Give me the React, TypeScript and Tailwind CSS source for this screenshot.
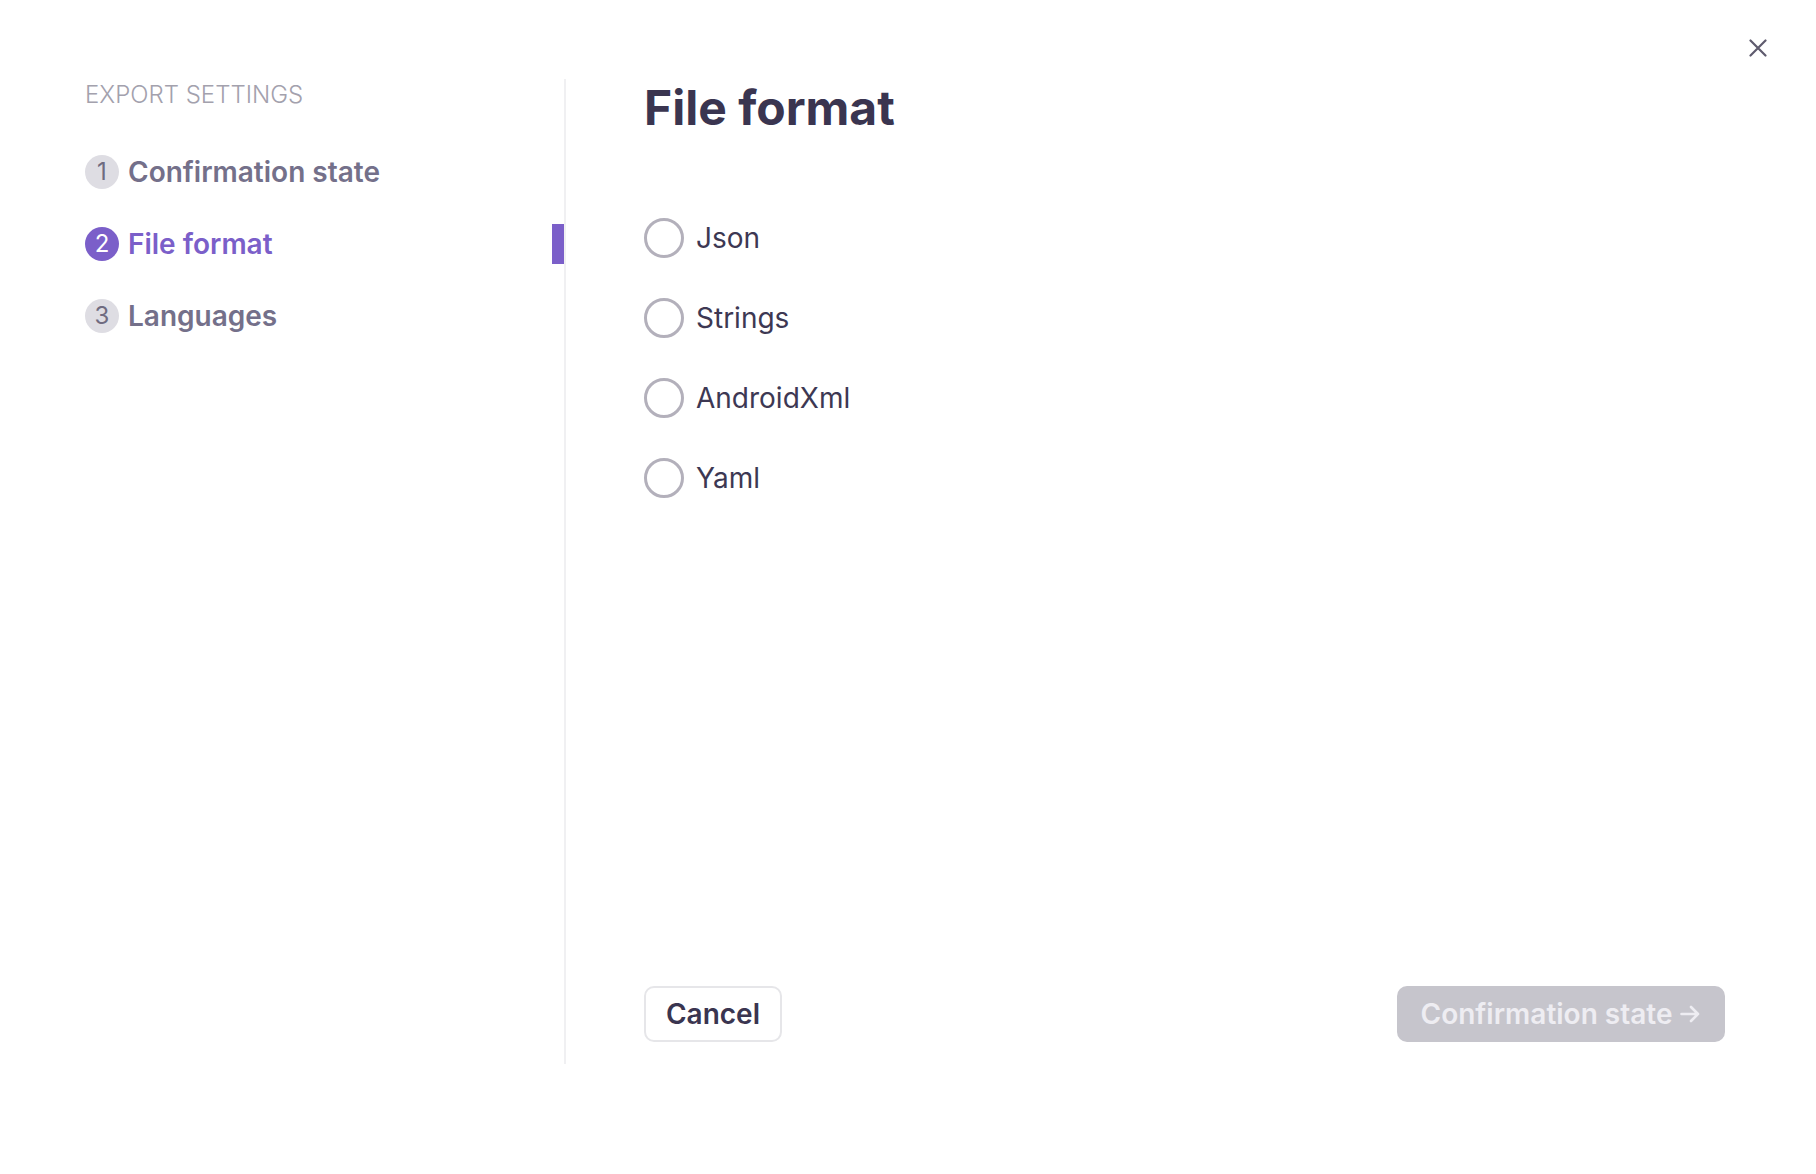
import React, { useState } from 'react';

const steps = [
  { n: 1, label: 'Confirmation state' },
  { n: 2, label: 'File format' },
  { n: 3, label: 'Languages' },
];

const formats = ['Json', 'Strings', 'AndroidXml', 'Yaml'];

export default function App() {
  const [selected, setSelected] = useState<string | null>(null);
  const active = 2;

  return (
    <div className="relative w-full h-[1174px] bg-white font-['Inter','Noto_Sans',sans-serif]">
      {/* Close */}
      <button className="absolute top-[39px] right-[49px] w-[18px] h-[18px] text-[#5f5b6e]">
        <svg viewBox="0 0 18 18" width="18" height="18" fill="none" stroke="currentColor" strokeWidth="2.2" strokeLinecap="round">
          <path d="M1.5 1.5L16.5 16.5M16.5 1.5L1.5 16.5" />
        </svg>
      </button>

      <div className="flex h-[1064px] pt-[79px] pl-[85px] pr-[91px]">
        {/* Sidebar */}
        <div className="w-[479px] flex flex-col">
          <div className="text-[24px] leading-[30px] text-[#a3a1ad] font-light mt-[1px]">EXPORT SETTINGS</div>
          <div className="mt-[26px] flex flex-col">
            {steps.map((s) => {
              const isActive = s.n === active;
              return (
                <div key={s.n} className="h-[72px] flex items-center justify-between">
                  <div className="flex items-center gap-[9px]">
                    <span
                      className={
                        isActive
                          ? 'w-[34px] h-[34px] rounded-full bg-[#7b5fc9] text-white text-[24px] flex items-center justify-center'
                          : 'w-[34px] h-[34px] rounded-full bg-[#dedde3] text-[#6f6b80] text-[24px] flex items-center justify-center'
                      }
                    >
                      {s.n}
                    </span>
                    <span
                      className={
                        isActive
                          ? 'text-[28px] font-semibold text-[#7b5fc9]'
                          : 'text-[28px] font-semibold text-[#74708a]'
                      }
                    >
                      {s.label}
                    </span>
                  </div>
                  {isActive && <div className="w-[12px] h-[40px] bg-[#7b5fc9]" />}
                </div>
              );
            })}
          </div>
        </div>

        {/* Main */}
        <div className="flex-1 flex flex-col border-l-2 border-[#f0f0f2] pl-[78px] pb-[22px]">
          <h1 className="text-[48px] leading-[58px] font-bold text-[#3a3550]">File format</h1>

          <div className="mt-[81px] flex flex-col gap-[40px]">
            {formats.map((f) => (
              <label key={f} className="h-[40px] flex items-center gap-[12px] cursor-pointer" onClick={() => setSelected(f)}>
                <span className="w-[40px] h-[40px] rounded-full border-[3px] border-[#b3b0bb] flex items-center justify-center">
                  {selected === f && <span className="w-[18px] h-[18px] rounded-full bg-[#7b5fc9]" />}
                </span>
                <span className="text-[28px] text-[#3d3853]">{f}</span>
              </label>
            ))}
          </div>

          <div className="mt-auto flex items-center justify-between">
            <button className="h-[56px] w-[138px] rounded-[10px] border-2 border-[#e6e6e9] bg-white text-[28px] font-semibold text-[#3a3550]">
              Cancel
            </button>
            <button className="h-[56px] w-[328px] rounded-[10px] bg-[#c6c5cc] text-[28px] font-semibold text-[#eeedf2] flex items-center justify-center gap-[7px]">
              <span>Confirmation state</span>
              <svg viewBox="0 0 22 22" width="22" height="22" fill="none" stroke="currentColor" strokeWidth="2.6" strokeLinecap="round" strokeLinejoin="round">
                <path d="M2.5 11H19M12 4L19 11L12 18" />
              </svg>
            </button>
          </div>
        </div>
      </div>
    </div>
  );
}
